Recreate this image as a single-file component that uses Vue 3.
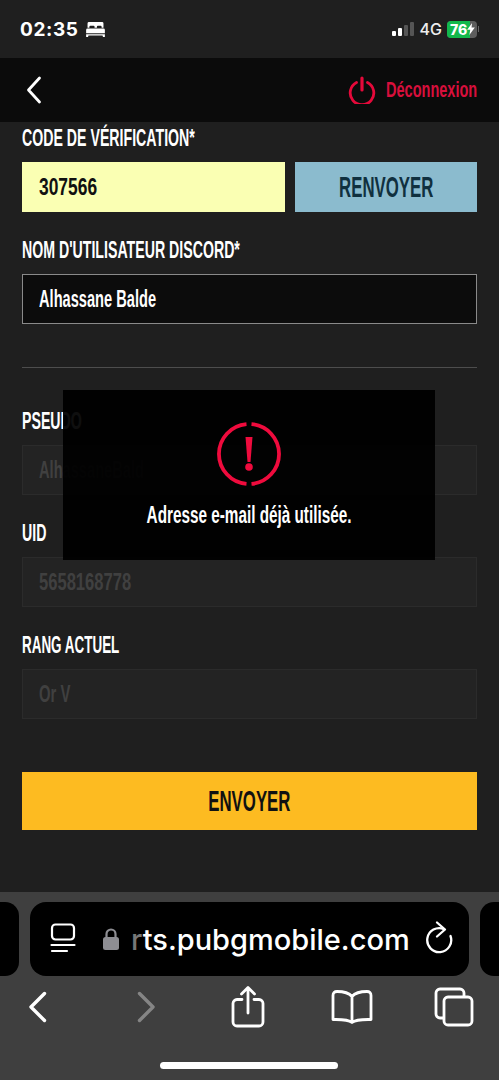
<script setup>
const locked = [
  { label: 'PSEUDO', value: 'AlhassaneBald', lsx: 0.59, sx: 0.61 },
  { label: 'UID', value: '5658168778', lsx: 0.59, sx: 0.69 },
  { label: 'RANG ACTUEL', value: 'Or V', lsx: 0.56, sx: 0.62 }
]
</script>

<template>
  <div class="page">
    <div class="status">
      <div class="status-left">
        <span class="time">02:35</span>
        <svg class="bed" width="19" height="15" viewBox="0 0 20 16">
          <path d="M3 0h14a1.500 1.500 0 0 1 1.500 1.500V6h-2V5a1 1 0 0 0-1-1h-3a1 1 0 0 0-1 1v1H9V5a1 1 0 0 0-1-1H4.500a1 1 0 0 0-1 1v1h-2V1.500A1.500 1.500 0 0 1 3 0z" fill="#fff"/>
          <path d="M1.500 7h17A1.500 1.500 0 0 1 20 8.500V12H0V8.500A1.500 1.500 0 0 1 1.500 7zM0 13h20v3h-2l-.5-1.500h-15L2 16H0z" fill="#fff"/>
        </svg>
      </div>
      <div class="status-right">
        <svg class="signal" width="22" height="14" viewBox="0 0 22 14">
          <rect x="0" y="9" width="4" height="5" rx="1" fill="#fff"/>
          <rect x="6" y="6" width="4" height="8" rx="1" fill="#fff"/>
          <rect x="12" y="3" width="4" height="11" rx="1" fill="#555"/>
          <rect x="18" y="0" width="4" height="14" rx="1" fill="#555"/>
        </svg>
        <span class="net">4G</span>
        <div class="battery">
          <span class="battery-fill"></span>
          <span class="battery-text">76</span>
          <svg class="bolt" width="8" height="12" viewBox="0 0 7 11"><path d="M4.500 0L0 6.300h2.800L2 11l5-6.800H4z" fill="#fff"/></svg>
        </div>
        <span class="battery-cap"></span>
      </div>
    </div>

    <header class="topbar">
      <svg class="back" width="16" height="28" viewBox="0 0 16 28" fill="none"><path d="M13.500 2L2.500 14l11 12" stroke="#fff" stroke-width="2.800" stroke-linecap="round" stroke-linejoin="round"/></svg>
      <div class="logout">
        <svg width="28" height="28" viewBox="0 0 28 28" fill="none">
          <path d="M8.500 6.500a11.800 11.800 0 1 0 11 0" stroke="#e5093a" stroke-width="2.800" stroke-linecap="round"/>
          <path d="M14 2v12" stroke="#e5093a" stroke-width="3.200" stroke-linecap="round"/>
        </svg>
        <span class="logout-text"><span class="cond">Déconnexion</span></span>
      </div>
    </header>

    <main class="form">
      <div class="field first">
        <label class="label"><span class="cond">CODE DE VÉRIFICATION*</span></label>
        <div class="code-row">
          <div class="input code"><span class="cond">307566</span></div>
          <button class="resend"><span class="cond mid">RENVOYER</span></button>
        </div>
      </div>
      <div class="field">
        <label class="label"><span class="cond">NOM D'UTILISATEUR DISCORD*</span></label>
        <div class="input dark"><span class="cond">Alhassane Balde</span></div>
      </div>
      <div class="divider"></div>
      <div v-for="item in locked" :key="item.label" class="field">
        <label class="label"><span class="cond" :style="{ transform: `scaleX(${item.lsx})` }">{{ item.label }}</span></label>
        <div class="input locked"><span class="cond" :style="{ transform: `scaleX(${item.sx})` }">{{ item.value }}</span></div>
      </div>
      <button class="submit"><span class="cond mid">ENVOYER</span></button>
    </main>

    <div class="modal">
      <svg width="66" height="66" viewBox="0 0 66 66" fill="none">
        <path d="M35.500 3.100a30 30 0 0 1 0 59.800M30.500 62.900a30 30 0 0 1 0-59.800" stroke="#ef0b3d" stroke-width="3.800"/>
        <path d="M29.500 16h7l-2 25h-3z" fill="#ef0b3d"/>
        <circle cx="33" cy="46" r="3.800" fill="#ef0b3d"/>
      </svg>
      <p class="modal-text"><span class="cond mid">Adresse e-mail déjà utilisée.</span></p>
    </div>

    <div class="browser">
      <div class="url-row">
        <div class="tab-edge"></div>
        <div class="url">
          <svg class="list" width="26" height="32" viewBox="0 0 26 32" fill="none" stroke="#fff" stroke-width="2.200" stroke-linecap="round">
            <rect x="2" y="1.500" width="22" height="15" rx="3.500"/>
            <path d="M1.500 22h23M2 28h15"/>
          </svg>
          <svg class="lock" width="18" height="24" viewBox="0 0 18 24">
            <path d="M4.500 11V7a4.500 4.500 0 0 1 9 0v4" fill="none" stroke="#8e8e93" stroke-width="2.200"/>
            <rect x="1" y="10" width="16" height="13" rx="2.500" fill="#8e8e93"/>
          </svg>
          <span class="url-text"><span class="fade">r</span>ts.pubgmobile.com</span>
          <svg class="reload" width="28" height="38" viewBox="0 0 28 38" fill="none" stroke="#fff" stroke-width="2.300" stroke-linecap="round" stroke-linejoin="round">
            <path d="M19 9.100A12 12 0 1 0 25.500 16"/>
            <path d="M12 2.500l8 7-8 7"/>
          </svg>
        </div>
        <div class="tab-edge"></div>
      </div>
      <nav class="tools">
        <svg class="t-back" width="20" height="32" viewBox="0 0 20 32" fill="none" stroke="#fff" stroke-width="3.400" stroke-linecap="round" stroke-linejoin="round"><path d="M16.500 2.500L3 16l13.500 13.500"/></svg>
        <svg class="t-fwd" width="20" height="32" viewBox="0 0 20 32" fill="none" stroke="#858585" stroke-width="3.400" stroke-linecap="round" stroke-linejoin="round"><path d="M3.500 2.500L17 16 3.500 29.500"/></svg>
        <svg class="t-share" width="34" height="42" viewBox="0 0 34 42" fill="none" stroke="#fff" stroke-width="2.800" stroke-linecap="round" stroke-linejoin="round"><path d="M11 13.500H6a4 4 0 0 0-4 4V36a4 4 0 0 0 4 4h22a4 4 0 0 0 4-4V17.500a4 4 0 0 0-4-4h-5"/><path d="M17 27V2M10.500 8L17 1.500 23.500 8"/></svg>
        <svg class="t-book" width="42" height="34" viewBox="0 0 42 34" fill="none" stroke="#fff" stroke-width="2.800" stroke-linecap="round" stroke-linejoin="round"><path d="M21 6.500C18 3 13 1.500 6 1.500 3.500 1.500 2 3 2 5.500v24c5 0 15-.5 19 3 4-3.500 14-3 19-3v-24c0-2.500-1.500-4-4-4-7 0-12 1.500-15 5zM21 6.500V31"/></svg>
        <svg class="t-tabs" width="40" height="40" viewBox="0 0 40 40" fill="none" stroke="#fff" stroke-width="2.800"><path d="M9 31H6a4 4 0 0 1-4-4V6a4 4 0 0 1 4-4h20a4 4 0 0 1 4 4v3"/><rect x="10" y="10" width="28" height="28" rx="4"/></svg>
      </nav>
      <div class="home"></div>
    </div>
  </div>
</template>

<style>
html, body { margin: 0; background: #1f1f1f; }
</style>

<style scoped>
.page {
  position: relative;
  width: 499px;
  height: 1080px;
  overflow: hidden;
  display: flex;
  flex-direction: column;
  background: #1f1f1f;
  color: #fff;
  font-family: "Liberation Sans", sans-serif;
}
.cond {
  display: inline-block;
  white-space: nowrap;
  transform-origin: left center;
  transform: scaleX(.59);
}
.cond.mid { transform-origin: center; }
.status {
  height: 58px;
  flex: none;
  display: flex;
  align-items: center;
  justify-content: space-between;
  padding: 0 20px;
  box-sizing: border-box;
  font-family: Inter, "Liberation Sans", sans-serif;
}
.status-left, .status-right { display: flex; align-items: center; }
.time { font-size: 19px; font-weight: 700; letter-spacing: .6px; }
.bed { margin-left: 7px; }
.signal { margin-top: -1px; }
.net { font-size: 16px; font-weight: 500; margin: 0 5px 0 6px; color: #eee; }
.battery {
  position: relative;
  width: 30px;
  height: 17px;
  border-radius: 4px;
  background: #5d5d5d;
  overflow: hidden;
  display: flex;
  align-items: center;
  font-size: 14px;
  font-weight: 800;
}
.battery-fill { position: absolute; left: 0; top: 0; bottom: 0; width: 23px; background: #12b84c; }
.battery-text { position: relative; margin-left: 3px; }
.bolt { position: relative; }
.battery-cap { width: 1px; height: 6px; margin-left: 1px; background: #666; }
.topbar {
  height: 64px;
  flex: none;
  display: flex;
  align-items: center;
  justify-content: space-between;
  padding: 0 22px 0 26px;
  box-sizing: border-box;
  background: #0b0b0b;
}
.logout { display: flex; align-items: center; gap: 10px; }
.logout-text { color: #d80f3c; font-size: 22px; font-weight: 700; width: 91px; height: 26px; line-height: 26px; }
.logout-text .cond { transform: scaleX(.66); }
.form { flex: 1; padding: 0 22px; min-height: 0; }
.field { margin-top: 23px; }
.field.first { margin-top: 1px; }
.label {
  display: block;
  height: 28px;
  line-height: 30px;
  margin-bottom: 11px;
  font-size: 24px;
  font-weight: 700;
}
.code-row { display: flex; gap: 10px; }
.input {
  height: 50px;
  box-sizing: border-box;
  display: flex;
  align-items: center;
  padding: 0 17px;
  font-size: 23px;
  font-weight: 700;
}
.code { width: 263px; flex: none; background: #faffb3; color: #111; font-size: 24px; }
.code .cond { transform: scaleX(.725); }
.resend {
  flex: 1;
  height: 50px;
  border: 0;
  padding: 0;
  background: #8bbbce;
  color: #10303f;
  font: inherit;
  font-size: 30px;
  font-weight: 700;
}
.resend .cond, .submit .cond { transform: scaleX(.56); }
.dark { background: #0c0c0c; border: 1px solid #8a8a8a; color: #fff; padding-left: 16px; }
.dark .cond { transform: scaleX(.636); }
.locked { background: #232323; border: 1px solid #2b2b2b; color: #404040; font-size: 24px; padding-left: 16px; }
.divider { height: 1px; background: #4d4d4d; margin-top: 43px; margin-bottom: 38px; }
.submit {
  display: block;
  width: 100%;
  height: 58px;
  margin-top: 53px;
  border: 0;
  padding: 0;
  background: #fdbb21;
  color: #111;
  font: inherit;
  font-size: 30px;
  font-weight: 700;
}
.modal {
  position: absolute;
  left: 63px;
  top: 390px;
  width: 372px;
  height: 170px;
  background: rgba(0, 0, 0, .94);
  display: flex;
  flex-direction: column;
  align-items: center;
  padding-top: 31px;
  box-sizing: border-box;
}
.modal-text { margin: 15px 0 0; font-size: 23px; font-weight: 700; }
.modal-text .cond { transform: scaleX(.665); }
.browser {
  flex: none;
  height: 188px;
  background: #3f3f3f;
  box-sizing: border-box;
  padding-top: 10px;
  position: relative;
}
.url-row { display: flex; gap: 11px; margin-left: -30px; width: 559px; }
.tab-edge { flex: none; width: 49px; height: 74px; background: #000; border-radius: 14px; }
.url {
  flex: none;
  width: 439px;
  height: 74px;
  background: #000;
  border-radius: 16px;
  display: flex;
  align-items: center;
  padding: 0 16px 0 20px;
  box-sizing: border-box;
}
.list, .lock, .reload { flex: none; }
.lock { margin-left: 26px; margin-right: 11px; }
.url-text { font-family: Inter, "Liberation Sans", sans-serif; font-size: 29px; font-weight: 500; white-space: nowrap; flex: 1; min-width: 0; }
.fade { color: #777; }
.tools {
  display: flex;
  align-items: center;
  padding: 6px 0 0 28px;
  height: 50px;
}
.t-fwd { margin-left: 88px; }
.t-share { margin-left: 75px; }
.t-book { margin-left: 66px; }
.t-tabs { margin-left: 61px; }
.home {
  position: absolute;
  left: 160px;
  bottom: 11px;
  width: 178px;
  height: 7px;
  border-radius: 4px;
  background: #fff;
}
</style>
